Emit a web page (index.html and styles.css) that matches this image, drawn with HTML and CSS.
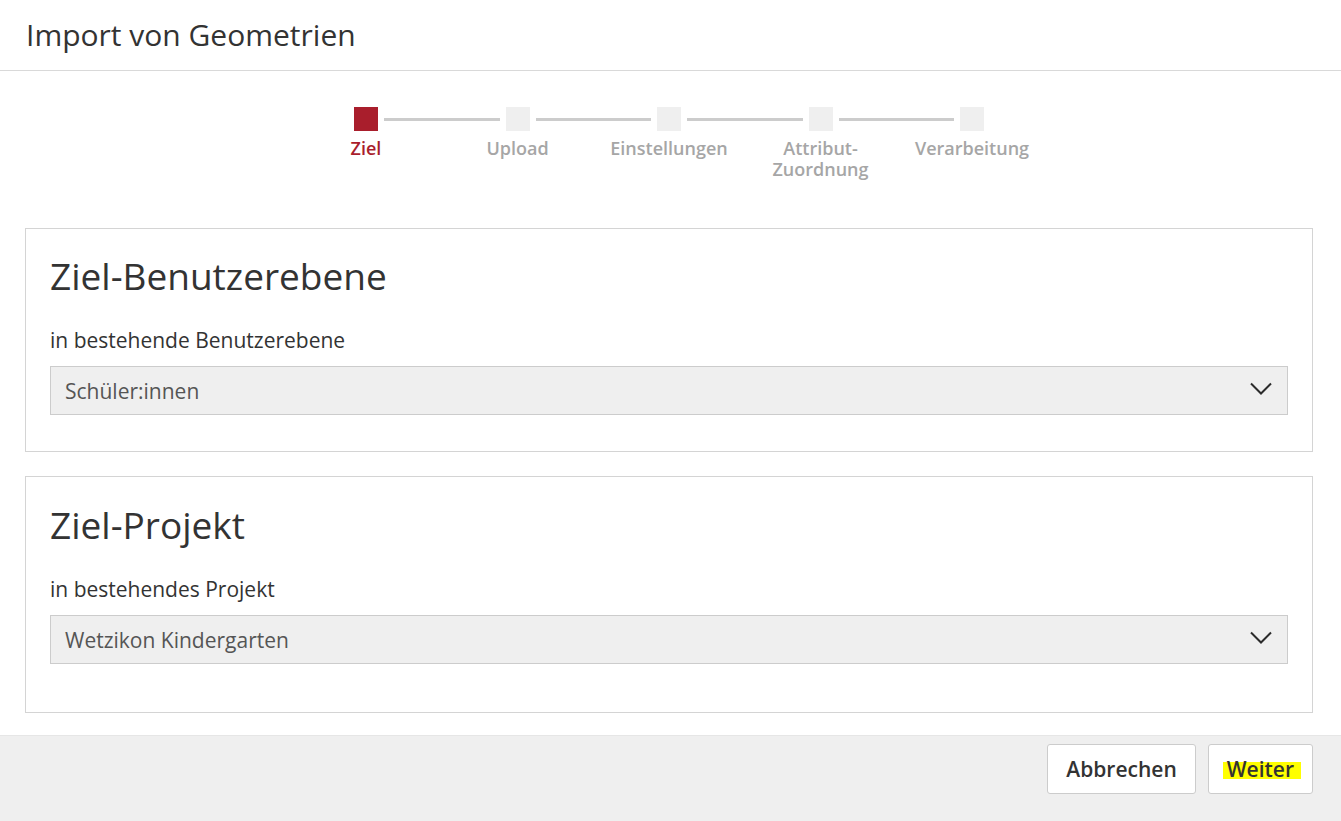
FILE: index.html
```html
<!DOCTYPE html>
<html lang="de">
<head>
<meta charset="utf-8">
<title>Import von Geometrien</title>
<link rel="stylesheet" href="styles.css">
</head>
<body>
<div class="dialog">
  <header class="dialog-header">
    <h1 class="dialog-title">Import von Geometrien</h1>
  </header>
  <main class="dialog-body">
    <ol class="stepper">
      <li class="step step--active step--first">
        <div class="step-track"><span class="step-line"></span><span class="step-box"></span><span class="step-line"></span></div>
        <span class="step-label">Ziel</span>
      </li>
      <li class="step">
        <div class="step-track"><span class="step-line"></span><span class="step-box"></span><span class="step-line"></span></div>
        <span class="step-label">Upload</span>
      </li>
      <li class="step">
        <div class="step-track"><span class="step-line"></span><span class="step-box"></span><span class="step-line"></span></div>
        <span class="step-label">Einstellungen</span>
      </li>
      <li class="step">
        <div class="step-track"><span class="step-line"></span><span class="step-box"></span><span class="step-line"></span></div>
        <span class="step-label">Attribut-Zuordnung</span>
      </li>
      <li class="step step--last">
        <div class="step-track"><span class="step-line"></span><span class="step-box"></span><span class="step-line"></span></div>
        <span class="step-label">Verarbeitung</span>
      </li>
    </ol>

    <section class="card">
      <h2 class="card-title">Ziel-Benutzerebene</h2>
      <div class="field-label">in bestehende Benutzerebene</div>
      <div class="select">
        <span class="select-value">Schüler:innen</span>
        <svg class="select-chevron" width="22" height="14" viewBox="0 0 22 14"><polyline points="1,1.5 11,11.5 21,1.5" fill="none" stroke="#2b2b2b" stroke-width="2"/></svg>
      </div>
    </section>

    <section class="card card--last">
      <h2 class="card-title">Ziel-Projekt</h2>
      <div class="field-label">in bestehendes Projekt</div>
      <div class="select">
        <span class="select-value">Wetzikon Kindergarten</span>
        <svg class="select-chevron" width="22" height="14" viewBox="0 0 22 14"><polyline points="1,1.5 11,11.5 21,1.5" fill="none" stroke="#2b2b2b" stroke-width="2"/></svg>
      </div>
    </section>
  </main>
  <footer class="dialog-footer">
    <button class="btn" type="button">Abbrechen</button>
    <button class="btn" type="button"><span class="highlight">Weiter</span></button>
  </footer>
</div>
</body>
</html>
```

FILE: styles.css
```css
* { box-sizing: border-box; }

html, body {
  margin: 0;
  padding: 0;
  background: #ffffff;
}

body {
  font-family: "Open Sans", "Liberation Sans", sans-serif;
  color: #333333;
  overflow: hidden;
}

.dialog {
  width: 1341px;
  height: 821px;
  display: flex;
  flex-direction: column;
}

.dialog-header {
  height: 71px;
  padding: 0 26px;
  display: flex;
  align-items: center;
  border-bottom: 1px solid #d9d9d9;
  flex: none;
}

.dialog-title {
  margin: 0;
  font-size: 30px;
  font-weight: 400;
  line-height: 38px;
  color: #333333;
}

.dialog-body {
  flex: 1;
  padding: 36px 28px 0 25px;
}

.stepper {
  list-style: none;
  margin: 0;
  padding: 0;
  display: flex;
  justify-content: center;
  height: 121px;
}

.step {
  width: 151.5px;
  display: flex;
  flex-direction: column;
  align-items: center;
}

.step-track {
  width: 100%;
  display: flex;
  align-items: center;
  height: 24px;
}

.step-line {
  flex: 1;
  height: 3px;
  background: #cccccc;
}

.step-line:first-child { margin-right: 6px; }
.step-line:last-child { margin-left: 6px; }

.step--first .step-line:first-child,
.step--last .step-line:last-child {
  background: transparent;
}

.step-box {
  width: 24px;
  height: 24px;
  background: #efefef;
  flex: none;
}

.step--active .step-box { background: #a91e2c; }

.step-label {
  margin-top: 7px;
  padding: 0 8px;
  font-size: 18px;
  font-weight: 600;
  line-height: 21px;
  color: #a6a6a6;
  text-align: center;
}

.step--active .step-label { color: #a91e2c; }

.card {
  border: 1px solid #d4d4d4;
  padding: 25px 24px 36px;
  margin-bottom: 24px;
}

.card--last { padding: 26px 24px 48px; margin-bottom: 0; }

.card-title {
  margin: 0;
  font-size: 37px;
  font-weight: 400;
  line-height: 44px;
  color: #333333;
}

.field-label {
  margin-top: 28px;
  font-size: 21px;
  line-height: 28px;
  color: #333333;
}

.select {
  margin-top: 12px;
  height: 49px;
  background: #efefef;
  border: 1px solid #cccccc;
  display: flex;
  align-items: center;
  justify-content: space-between;
  padding: 0 15px 0 14px;
}

.select-value {
  font-size: 21px;
  color: #555555;
}

.select-chevron { display: block; margin-top: -3px; }

.dialog-footer {
  flex: none;
  height: 86px;
  background: #efefef;
  border-top: 1px solid #e6e6e6;
  display: flex;
  justify-content: flex-end;
  align-items: flex-start;
  gap: 12px;
  padding: 8px 28px 0 0;
}

.btn {
  height: 50px;
  padding: 0 18px;
  background: #ffffff;
  border: 1px solid #cccccc;
  border-radius: 3px;
  font-family: "Open Sans", "Liberation Sans", sans-serif;
  font-size: 21px;
  font-weight: 600;
  line-height: 28px;
  color: #333333;
}

.highlight {
  padding: 0 7px 0 4px;
  margin: 0 -7px 0 -4px;
  background: linear-gradient(to bottom, transparent 7.3px, #ffff00 7.3px, #ffff00 24.3px, transparent 24.3px);
}
```
